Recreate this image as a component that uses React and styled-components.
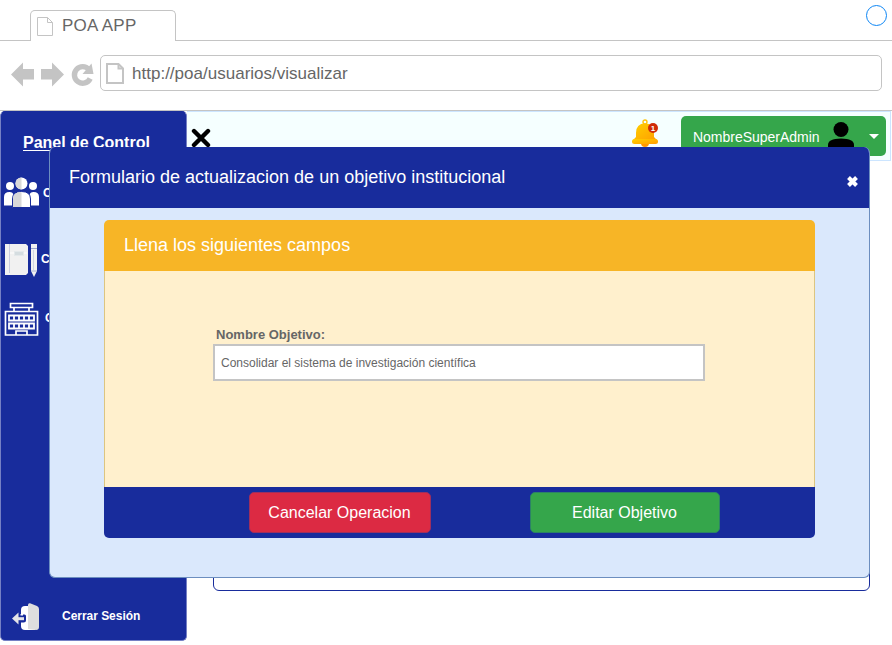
import React from "react";
import styled, { createGlobalStyle } from "styled-components";

const navy = "#182c9c";
const green = "#35a64b";
const grey = "#c4c4c4";

const GlobalStyle = createGlobalStyle`
  * { box-sizing: border-box; }
  body { margin: 0; background: #fff; font-family: "Liberation Sans", Arial, sans-serif; overflow: hidden; }
  svg { display: block; flex: none; }
  button { font-family: inherit; }
`;

const Browser = styled.div`
  position: relative;
  width: 892px;
  height: 645px;
  display: flex;
  flex-direction: column;
  overflow: hidden;
`;

const TabStrip = styled.div`
  height: 41px;
  flex: none;
  display: flex;
  align-items: flex-end;
`;

const StripLine = styled.div`
  width: ${(p) => p.$width || "auto"};
  flex: ${(p) => (p.$width ? "none" : 1)};
  height: 41px;
  border-bottom: 1px solid ${grey};
  display: flex;
  justify-content: flex-end;
  padding: 5px 5px 0 0;
`;

const Tab = styled.div`
  width: 146px;
  height: 31px;
  border: 1px solid ${grey};
  border-bottom: 0;
  border-radius: 5px 5px 0 0;
  display: flex;
  align-items: center;
  padding: 0 0 0 6px;
  gap: 9px;
  color: #666;
  font-size: 17px;
  line-height: 20px;

  span { letter-spacing: 0.25px; margin-top: -1px; }
`;

const WindowDot = styled.div`
  width: 21px;
  height: 21px;
  border: 1px solid #0d86f5;
  border-radius: 50%;
`;

const Toolbar = styled.div`
  height: 69px;
  flex: none;
  display: flex;
  align-items: flex-start;
  padding: 14px 10px 0 11px;
`;

const NavIcons = styled.div`
  width: 89px;
  height: 40px;
  display: flex;
  align-items: center;
`;

const AddressBar = styled.div`
  flex: 1;
  height: 36px;
  border: 1px solid ${grey};
  border-radius: 5px;
  display: flex;
  align-items: center;
  padding-left: 5px;
  gap: 8px;
  font-size: 17px;
  line-height: 20px;
  color: #666;

  span { letter-spacing: 0.01px; margin-top: 1px; }
`;

const Workspace = styled.div`
  flex: 1;
  border-top: 1px solid ${grey};
  display: flex;
  align-items: flex-start;
`;

const Sidebar = styled.aside`
  width: 187px;
  height: 530px;
  padding-top: 21px;
  flex: none;
  display: flex;
  flex-direction: column;
  color: #fff;
  background: ${navy};
  border: 1px solid #7580c4;
  border-top-color: ${navy};
  border-radius: 5px;
`;

const PanelTitle = styled.h2`
  margin: 0 0 0 22px;
  font-size: 16px;
  line-height: 20px;
  letter-spacing: -0.02px;
  text-decoration: underline;
  text-underline-offset: 2px;
`;

const NavItem = styled.div`
  display: flex;
  align-items: center;
  height: ${(p) => p.$height}px;
  margin-top: ${(p) => p.$top}px;
  padding-left: ${(p) => p.$indent || 3}px;
  gap: ${(p) => p.$gap}px;
`;

const NavLabel = styled.span`
  letter-spacing: -0.03px;
  margin-top: ${(p) => p.$shift || 0}px;
  font-size: 12px;
  font-weight: 700;
`;

const Main = styled.main`
  flex: 1;
  display: flex;
  flex-direction: column;
`;

const TopBar = styled.header`
  height: 50px;
  border: 1px solid #cce5ff;
  border-left: 0;
  margin-right: 1px;
  background: #f5ffff;
  display: flex;
  align-items: flex-start;
  padding: 4px 4px 0 4px;
`;

const TopIcon = styled.div`
  padding-top: ${(p) => p.$top}px;
  margin-right: ${(p) => p.$after}px;
`;

const UserMenu = styled.div`
  width: 205px;
  height: 40px;
  background: ${green};
  border-radius: 5px;
  color: #fff;
  font-size: 14px;
  display: flex;
  align-items: center;
  padding-left: 12px;
  gap: 8px;

  span { width: 127px; letter-spacing: -0.02px; margin-top: 2px; }
  svg:last-child { margin-left: 7px; }
`;

const ContentPanel = styled.section`
  height: 420px;
  margin: 10px 22px 0 26px;
  border: 1px solid ${navy};
  border-radius: 6px;
`;

const Modal = styled.section`
  position: absolute;
  left: 49px;
  top: 147px;
  width: 821px;
  height: 431px;
  background: #dae8fc;
  border: 1px solid #6c8ebf;
  border-top: 0;
  border-radius: 6px;
  overflow: hidden;
`;

const ModalHeader = styled.header`
  height: 61px;
  margin: 0 -1px;
  padding: 0 12px 0 20px;
  background: ${navy};
  display: flex;
  justify-content: space-between;
  color: #fff;

  h1 { margin: 20px 0 0; font-size: 18px; font-weight: 400; line-height: 21px; }
  svg { margin-top: 29px; }
`;

const FormCard = styled.form`
  width: 711px;
  height: 318px;
  margin: 12px 0 0 54px;
  display: flex;
  flex-direction: column;
  border-radius: 5px;
  overflow: hidden;
`;

const CardHeader = styled.header`
  height: 51px;
  background: #f7b526;
  color: #fff;
  font-size: 18px;
  line-height: 50px;
  padding-left: 20px;
`;

const CardBody = styled.div`
  height: 216px;
  background: #fff0cd;
  border: solid #dcc580;
  border-width: 0 1px;
  padding: 55px 109px 0 108px;
`;

const FieldLabel = styled.label`
  display: block;
  padding-left: 3px;
  height: 18px;
  line-height: 18px;
  color: #666;
  font-size: 13px;
  font-weight: 700;
`;

const FieldInput = styled.div`
  width: 492px;
  height: 37px;
  border: 2px solid ${grey};
  background: #fff;
  color: #666;
  font-size: 12px;
  line-height: 35px;
  padding-left: 6px;
`;

const CardFooter = styled.footer`
  height: 51px;
  background: ${navy};
  display: flex;
  gap: 99px;
  padding: 5px 0 0 145px;
`;

const ActionButton = styled.button`
  width: ${(p) => p.$width}px;
  height: 41px;
  padding: 0 1px 0 0;
  border: 1px solid ${(p) => p.$edge};
  border-radius: 5px;
  background: ${(p) => p.$color};
  color: #fff;
  font-size: 16px;
`;

const PageIcon = ({ width, height, stroke = 1 }) => (
  <svg width={width} height={height} viewBox={`0 0 ${width} ${height}`} fill="none" stroke={grey} strokeWidth={stroke}>
    <path d={`M${stroke / 2} ${stroke / 2}H${width - 5.5}L${width - stroke / 2} 5.5V${height - stroke / 2}H${stroke / 2}Z`} />
    <path d={`M${width - 5.5} ${stroke / 2}V5.5H${width - stroke / 2}`} />
  </svg>
);

const BrowserControls = () => (
  <svg width="84" height="26" viewBox="0 0 84 26" fill={grey}>
    <path d="M0 12.500L12 .5V7H23V17.500H12V24.500Z" />
    <path d="M53 12.500L41 .5V7H30V17.500H41V24.500Z" />
    <path d="M79.200 16.500A8.300 8.300 0 1 1 78 7.500" fill="none" stroke={grey} strokeWidth="5.400" />
    <path d="M80.500 1.500L82.500 12H71.500Z" />
  </svg>
);

const PeopleIcon = () => (
  <svg width="35" height="31" viewBox="0 0 35 31" fill="#fff">
    <circle cx="6" cy="9" r="4" />
    <circle cx="29" cy="9" r="4" />
    <path d="M0 28.500V20Q0 15 5.500 15Q9 15 9.500 18L8 28.500ZM35 28.500V20Q35 15 29.500 15Q26 15 25.500 18L27 28.500Z" />
    <circle cx="17.500" cy="6.500" r="6" />
    <path d="M8.500 30.500V22Q8.500 14.500 17.500 14.500T26.500 22V30.500Z" stroke={navy} strokeWidth="1" />
    <path d="M17.500 .5A6 6 0 0 0 17.500 12.500ZM17.500 15Q9 15 9 22V30H17.500Z" fill="#d8d8d8" />
  </svg>
);

const NotebookIcon = () => (
  <svg width="33" height="34" viewBox="0 0 33 34">
    <path d="M1 1H22L24 3V30L22 32H1Z" fill="#f1f1f1" />
    <path d="M5.500 1V30" stroke="#c9cce0" />
    <path d="M6 10H23" stroke="#fff" />
    <rect x="10.500" y="8.500" width="9" height="4" fill="#d5dde0" stroke="#e4e9eb" />
    <path d="M27 1H33V28L30 34L27 28Z" fill="#f1f1f1" />
    <path d="M27 5.500H33" stroke="#9da7cc" strokeWidth="1" />
    <path d="M29.500 7V27" stroke="#ced4e3" />
    <path d="M27 28H33" stroke="#aab2d4" />
  </svg>
);

const BuildingIcon = () => (
  <svg width="35" height="34" viewBox="0 0 35 34" fill="none" stroke="#fff" strokeWidth="1.700">
    <path d="M6.500 1.500H28.500V5.500H6.500ZM10 6V9.500M25 6V9.500M1.500 9.500H33.500V33H1.500ZM12 33V29H23V33" />
    <path d="M5 13.500H30V18.500H5ZM5 21.500H30V26.500H5ZM10 13.500V18.500M15 13.500V18.500M20 13.500V18.500M25 13.500V18.500M10 21.500V26.500M15 21.500V26.500M20 21.500V26.500M25 21.500V26.500" strokeWidth="1.800" />
  </svg>
);

const LogoutIcon = () => (
  <svg width="28" height="28" viewBox="0 0 28 28">
    <path d="M9 7Q9 3 13 3H23V27H13Q9 27 9 23Z" fill="#fff" />
    <path d="M16 2Q16 0 18 .3L25 3Q27 4 27 6V24Q27 27 24 27L16 26Z" fill="#dedede" />
    <path d="M8 11.500H12.500Q14 11.500 14 13V17Q14 19.500 11.500 19.500H8Z" fill={navy} />
    <path d="M0 15.500L6.500 9.500V21.500Z" fill="#e4e4e8" />
    <path d="M5 15.700H12" stroke="#e4e4e8" strokeWidth="3" />
    <path d="M8.500 12.500H11V11H8.500Z" fill="#fff" />
  </svg>
);

const BellIcon = () => (
  <svg width="27" height="29" viewBox="0 0 27 29">
    <defs>
      <linearGradient id="bell" x1="0" y1="0" x2="1" y2="1">
        <stop offset="0" stopColor="#ffd000" />
        <stop offset="1" stopColor="#ff9c00" />
      </linearGradient>
    </defs>
    <circle cx="13" cy="3" r="2" fill="none" stroke="#ffc20a" strokeWidth="1.400" />
    <circle cx="13" cy="24" r="4" fill="#ff9800" />
    <path d="M4 14Q4 4.500 13 4.500T22 14V18L25 21V23H1V21L4 18Z" fill="url(#bell)" />
    <rect x="0" y="20" width="26" height="5" rx="2.500" fill="url(#bell)" />
    <circle cx="21" cy="9" r="5" fill="#cf2b08" />
    <text x="21" y="12" textAnchor="middle" fill="#fff" fontSize="8" fontWeight="700">1</text>
  </svg>
);

const UserIcon = () => (
  <svg width="26" height="30" viewBox="0 0 26 30">
    <circle cx="13" cy="8.500" r="7.500" />
    <path d="M0 30V24Q0 17.500 13 17.500T26 24V30Z" />
  </svg>
);

const Cross = ({ size, inset, stroke, color }) => (
  <svg width={size} height={size} viewBox={`0 0 ${size} ${size}`}>
    <path
      d={`M${inset} ${inset}L${size - inset} ${size - inset}M${size - inset} ${inset}L${inset} ${size - inset}`}
      stroke={color}
      strokeWidth={stroke}
      strokeLinecap={color === "#000" ? "round" : "butt"}
    />
  </svg>
);

export default function App() {
  return (
    <Browser>
      <GlobalStyle />
      <TabStrip>
        <StripLine $width="30px" />
        <Tab>
          <PageIcon width={16} height={19} />
          <span>POA APP</span>
        </Tab>
        <StripLine><WindowDot /></StripLine>
      </TabStrip>
      <Toolbar>
        <NavIcons><BrowserControls /></NavIcons>
        <AddressBar>
          <PageIcon width={18} height={21} stroke={2} />
          <span>http://poa/usuarios/visualizar</span>
        </AddressBar>
      </Toolbar>
      <Workspace>
        <Sidebar>
          <PanelTitle>Panel de Control</PanelTitle>
          <NavItem $height={31} $top={24} $gap={4}><PeopleIcon /><NavLabel>C</NavLabel></NavItem>
          <NavItem $height={34} $top={35} $gap={4}><NotebookIcon /><NavLabel $shift={-2}>C</NavLabel></NavItem>
          <NavItem $height={34} $top={25} $gap={6}><BuildingIcon /><NavLabel $shift={-2}>C</NavLabel></NavItem>
          <NavItem $height={28} $top={267} $indent={11} $gap={22}><LogoutIcon /><NavLabel $shift={-3}>Cerrar Sesión</NavLabel></NavItem>
        </Sidebar>
        <Main>
          <TopBar>
            <TopIcon $top={12} $after={421}><Cross size={20} inset={3} stroke={4.4} color="#000" /></TopIcon>
            <TopIcon $top={3} $after={22}><BellIcon /></TopIcon>
            <UserMenu>
              <span>NombreSuperAdmin</span>
              <UserIcon />
              <svg width="10" height="5" viewBox="0 0 10 5" fill="#fff"><path d="M0 0H10L5 5Z" /></svg>
            </UserMenu>
          </TopBar>
          <ContentPanel />
        </Main>
      </Workspace>
      <Modal>
        <ModalHeader>
          <h1>Formulario de actualizacion de un objetivo institucional</h1>
          <Cross size={11} inset={1.5} stroke={4} color="#fff" />
        </ModalHeader>
        <FormCard>
          <CardHeader>Llena los siguientes campos</CardHeader>
          <CardBody>
            <FieldLabel>Nombre Objetivo:</FieldLabel>
            <FieldInput>Consolidar el sistema de investigación científica</FieldInput>
          </CardBody>
          <CardFooter>
            <ActionButton type="button" $width={182} $color="#dc2a43" $edge="#9d2f5e">Cancelar Operacion</ActionButton>
            <ActionButton type="button" $width={190} $color={green} $edge="#2c8266">Editar Objetivo</ActionButton>
          </CardFooter>
        </FormCard>
      </Modal>
    </Browser>
  );
}
